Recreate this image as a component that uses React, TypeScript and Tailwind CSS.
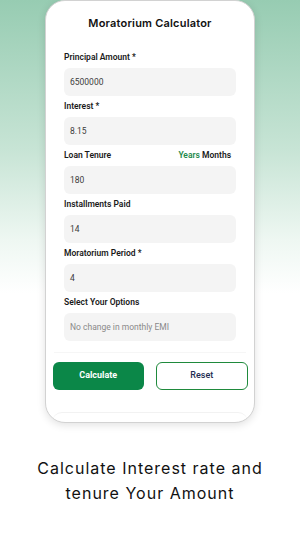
const fields = [
  { label: "Principal Amount *", value: "6500000" },
  { label: "Interest *", value: "8.15" },
  { label: "Loan Tenure", value: "180", toggle: true },
  { label: "Installments Paid", value: "14" },
  { label: "Moratorium Period *", value: "4" },
  { label: "Select Your Options", value: "No change in monthly EMI", placeholder: true },
];

export default function App() {
  return (
    <div className="flex h-[533px] w-[300px] flex-col items-center overflow-hidden bg-[linear-gradient(to_bottom,#97ccb2_0%,#c7e4d5_28%,#eef7f2_45%,#ffffff_55%)] font-['Roboto',sans-serif]">
      <div className="flex h-[423px] w-[210px] shrink-0 flex-col rounded-[20px] border border-[#d2d2d2] bg-white shadow-[0_2px_8px_rgba(0,0,0,0.12)]">
        <h1 className="mt-[15px] text-center font-['Inter',sans-serif] text-[11px] font-semibold leading-[15px] tracking-[0.2px] text-[#111]">
          Moratorium Calculator
        </h1>
        <div className="mt-[20px] flex flex-col gap-[4px] px-[18px]">
          {fields.map((f) => (
            <div key={f.label} className="flex flex-col">
              <div className="flex h-[12px] items-center justify-between">
                <span className="text-[8.5px] font-semibold leading-[12px] text-[#1a1a1a]">{f.label}</span>
                {f.toggle && (
                  <span className="pr-[5px] text-[8.5px] font-semibold leading-[12px]">
                    <span className="text-[#1f8a4c]">Years</span>{" "}
                    <span className="text-[#1a1a1a]">Months</span>
                  </span>
                )}
              </div>
              <div className="mt-[5px] flex h-[28px] items-center rounded-[6px] bg-[#f4f4f4] px-[6px]">
                <span
                  className={
                    f.placeholder
                      ? "text-[8.5px] text-[#8a8a8a]"
                      : "text-[8.5px] text-[#3c3c3c]"
                  }
                >
                  {f.value}
                </span>
              </div>
            </div>
          ))}
        </div>
        <div className="mx-[8px] mt-[11px] border-t border-[#f6f6f6]" />
        <div className="mt-[9px] flex gap-[12px] pl-[7px] pr-[6px]">
          <button className="flex h-[28px] flex-1 items-center justify-center rounded-[6px] bg-[#0b8748] text-[9px] font-bold text-white">
            Calculate
          </button>
          <button className="flex h-[28px] flex-1 items-center justify-center rounded-[6px] border-[1.5px] border-[#1f8a3c] bg-white text-[9px] font-medium text-[#1d2c52]">
            Reset
          </button>
        </div>
        <div className="mx-[6px] mt-auto h-[10px] rounded-t-[12px] border-t border-[#f2f2f2]" />
      </div>
      <p className="mt-[33px] text-center font-['Inter',sans-serif] text-[16px] leading-[25px] tracking-[1px] text-[#111]">
        Calculate Interest rate and
        <br />
        tenure Your Amount
      </p>
    </div>
  );
}
